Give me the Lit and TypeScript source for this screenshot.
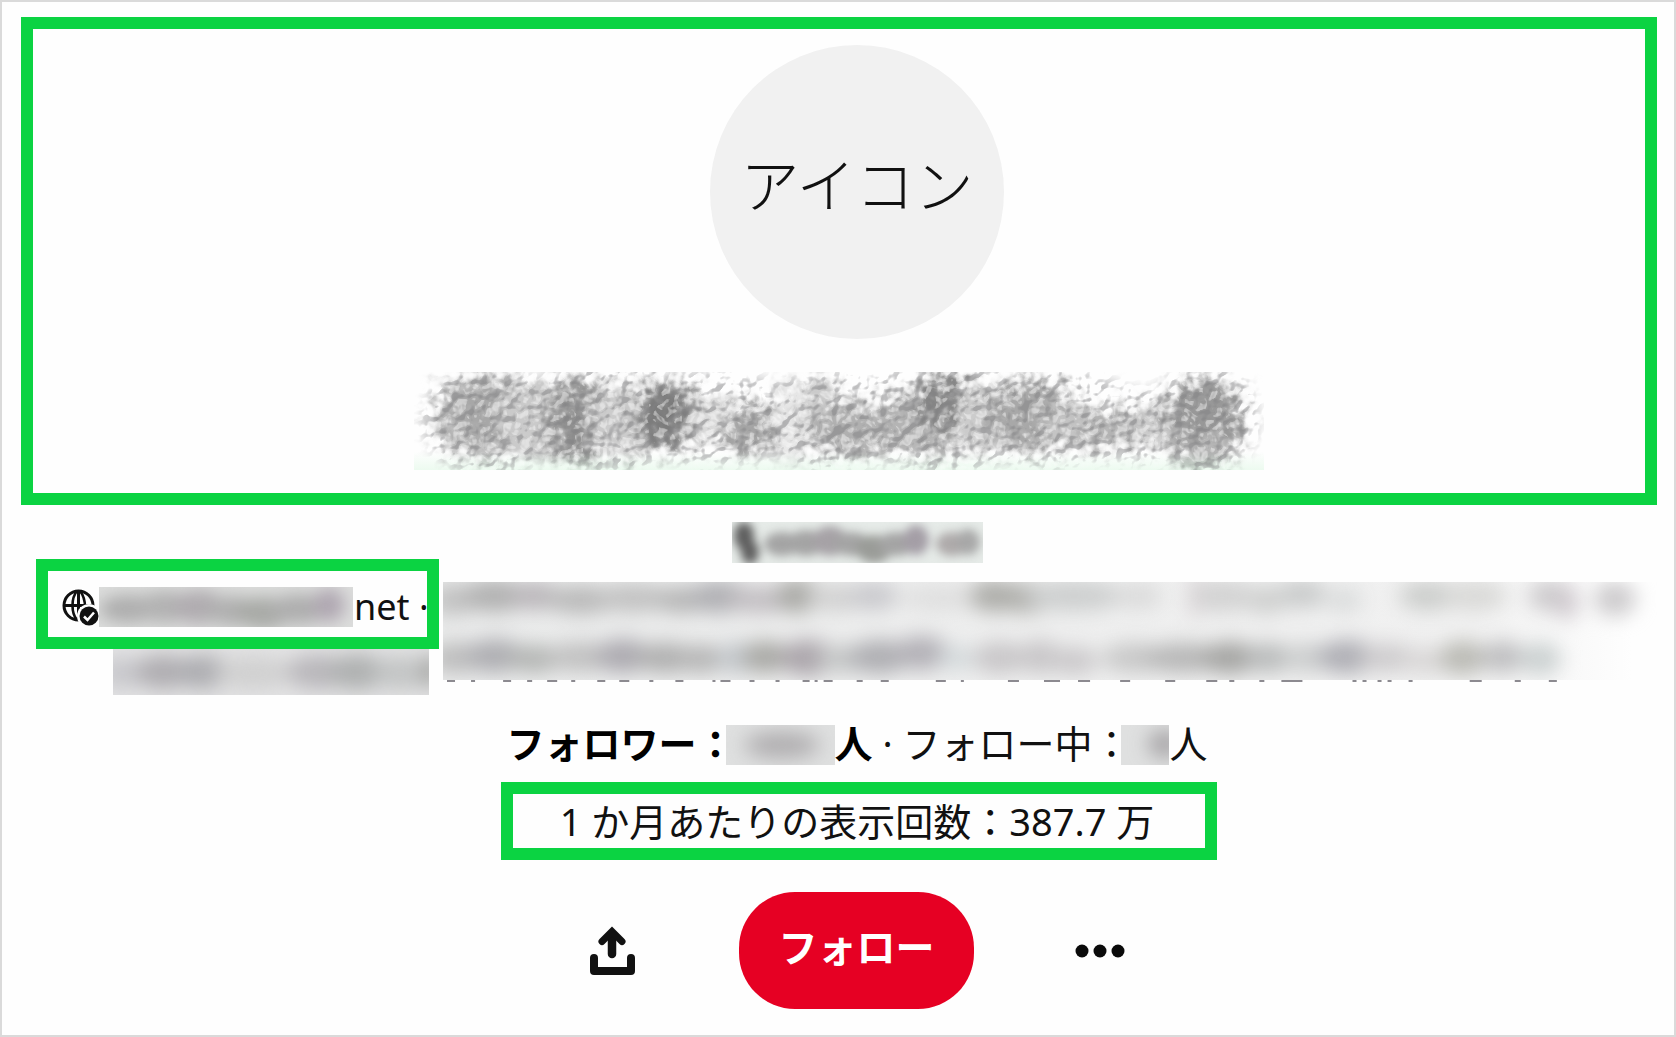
import { LitElement, html, svg, css } from "lit";
import { customElement, property } from "lit/decorators.js";

/** cx, cy, rx, ry, fill */
type Blob = [number, number, number, number, string];

const ellipses = (blobs: Blob[]) =>
  blobs.map(([cx, cy, rx, ry, fill]) => svg`<ellipse cx=${cx} cy=${cy} rx=${rx} ry=${ry} fill=${fill}></ellipse>`);

const NAME_BLOBS: Blob[] = [
  [70, 44, 50, 46, "#c4c4c4"],
  [60, 40, 34, 30, "#aeaeae"],
  [84, 42, 30, 32, "#a6a6a6"],
  [120, 48, 40, 42, "#cacaca"],
  [162, 50, 26, 46, "#9a9a9a"],
  [162, 58, 16, 26, "#8e8e8e"],
  [208, 48, 34, 40, "#cccccc"],
  [254, 44, 34, 36, "#9a9a9a"],
  [254, 44, 24, 24, "#7c7c7c"],
  [300, 46, 30, 22, "#dadada"],
  [340, 58, 27, 26, "#a4a4a4"],
  [376, 50, 20, 44, "#e6e6e6"],
  [408, 42, 20, 40, "#cacaca"],
  [444, 58, 48, 26, "#b0b0b0"],
  [508, 50, 42, 36, "#b4b4b4"],
  [532, 32, 28, 28, "#868686"],
  [568, 48, 30, 36, "#cccccc"],
  [618, 44, 44, 36, "#a8a8a8"],
  [660, 56, 36, 22, "#c4c4c4"],
  [706, 56, 44, 18, "#b2b2b2"],
  [750, 54, 30, 22, "#cccccc"],
  [788, 52, 40, 46, "#b4b4b4"],
  [790, 38, 34, 28, "#989898"],
];

/** Area the glass ripples cover around the letters. */
const NAME_HALO: Blob[] = [
  [74, 48, 66, 54, "#fff"],
  [190, 44, 90, 54, "#fff"],
  [300, 46, 90, 46, "#fff"],
  [420, 48, 80, 48, "#fff"],
  [530, 44, 90, 56, "#fff"],
  [640, 46, 90, 48, "#fff"],
  [730, 54, 80, 36, "#fff"],
  [790, 46, 54, 56, "#fff"],
];

const URL_BLOBS: Blob[] = [
  [12, 14, 10, 14, "#5e5e5e"],
  [18, 30, 9, 12, "#5e5e5e"],
  [50, 22, 18, 12, "#a4a4a4"],
  [74, 21, 18, 13, "#a4a4a4"],
  [98, 19, 18, 15, "#a6a2a6"],
  [120, 22, 18, 12, "#a4a4a4"],
  [142, 27, 18, 14, "#9a9c98"],
  [164, 22, 18, 12, "#a4a4a4"],
  [184, 18, 13, 15, "#a49ea6"],
  [220, 22, 16, 12, "#aeaaaa"],
  [236, 20, 12, 13, "#a8a8a8"],
];

const DOMAIN_BLOBS: Blob[] = [
  [30, 22, 30, 14, "#aeaeae"],
  [66, 20, 28, 16, "#b2b2b2"],
  [100, 20, 26, 17, "#b0acb0"],
  [134, 24, 28, 15, "#b0b0b0"],
  [165, 26, 28, 16, "#a8aaa6"],
  [200, 22, 30, 15, "#aeaeae"],
  [230, 18, 16, 17, "#b0a8b2"],
];

const LINE_BLOBS: Blob[] = [
  [8, 24, 24, 16, "#c8c8cc"],
  [50, 23, 28, 17, "#aeacb0"],
  [90, 23, 28, 17, "#acacb0"],
  [140, 24, 38, 17, "#d0d0d0"],
  [205, 23, 32, 17, "#b8b6ba"],
  [245, 23, 30, 18, "#aeb0b0"],
  [288, 24, 28, 17, "#c2c4c4"],
  [318, 22, 6, 18, "#8c8c88"],
];

const BIO_BLOBS: Blob[] = [
  [10, 18, 16, 16, "#c2c2c2"],
  [52, 14, 22, 16, "#b0b0b0"],
  [92, 14, 16, 14, "#b8b4b8"],
  [138, 18, 24, 14, "#b8b8b8"],
  [190, 16, 24, 14, "#c0c0c0"],
  [238, 18, 18, 13, "#b4b4b4"],
  [276, 15, 20, 16, "#aeaeb2"],
  [316, 18, 22, 13, "#c0bcc0"],
  [354, 14, 14, 17, "#a8a8a4"],
  [392, 16, 20, 13, "#d0d0d0"],
  [430, 14, 16, 14, "#c8c8cc"],
  [500, 16, 30, 12, "#dedede"],
  [550, 14, 16, 16, "#acaca8"],
  [582, 16, 18, 15, "#acaca8"],
  [630, 14, 34, 15, "#cccece"],
  [694, 14, 16, 13, "#dadada"],
  [752, 14, 5, 22, "#d8d2d5"],
  [780, 14, 20, 16, "#d2d2d2"],
  [822, 18, 14, 14, "#cecfce"],
  [858, 12, 16, 14, "#c8caca"],
  [900, 18, 12, 13, "#dadcdc"],
  [984, 14, 20, 14, "#caccca"],
  [1030, 14, 22, 14, "#d8d8d6"],
  [1106, 14, 15, 16, "#cccacc"],
  [1122, 20, 8, 18, "#d0cacf"],
  [1170, 17, 14, 17, "#cccacc"],
  [12, 76, 18, 16, "#bebebe"],
  [52, 74, 20, 17, "#aeaeb2"],
  [92, 77, 18, 14, "#b2b4b2"],
  [138, 75, 24, 15, "#c0c0c0"],
  [180, 74, 18, 17, "#acaab0"],
  [222, 76, 20, 15, "#aeaeae"],
  [258, 77, 16, 14, "#b4b4b4"],
  [294, 76, 14, 16, "#c4c8cc"],
  [322, 75, 15, 16, "#a8a8a4"],
  [364, 76, 18, 18, "#aaa4aa"],
  [400, 77, 18, 14, "#c4c6c6"],
  [436, 75, 20, 17, "#aeaeb2"],
  [478, 71, 18, 17, "#b2b0b6"],
  [512, 76, 12, 12, "#d2d8da"],
  [556, 76, 18, 16, "#c8c6c8"],
  [596, 75, 14, 17, "#c8c6c8"],
  [630, 79, 16, 14, "#cac8ca"],
  [690, 76, 22, 15, "#c8c8c8"],
  [738, 76, 26, 15, "#b6b6b6"],
  [786, 76, 20, 16, "#a4a4a2"],
  [824, 76, 16, 15, "#b8baba"],
  [862, 76, 16, 15, "#cccece"],
  [903, 75, 20, 17, "#aeaeb4"],
  [944, 76, 20, 14, "#cccacc"],
  [980, 79, 18, 13, "#d8d6d6"],
  [1018, 76, 15, 17, "#babab4"],
  [1058, 75, 14, 16, "#bebec0"],
  [1096, 77, 13, 16, "#cad0d0"],
].map(([cx, cy, rx, ry, fill]) => [cx, cy, Math.round((rx as number) * 1.5), ry, fill] as Blob);

const FOLLOWER_BLOBS: Blob[] = [[56, 20, 38, 13, "#aeacae"]];
const FOLLOWING_BLOBS: Blob[] = [[44, 19, 18, 15, "#aeacae"]];

/** x, width of the letter tips that show below the blurred lines */
const LETTER_TIPS: [number, number][] = [
  [4, 8], [28, 4], [60, 8], [84, 5], [104, 10], [128, 4], [154, 8],
  [176, 10], [206, 4], [232, 8], [269, 3], [277, 10], [306, 5], [332, 4], [359, 7], [371, 3],
  [380, 9], [413, 6], [437, 8], [492, 10], [517, 3], [564, 11], [600, 16], [634, 12],
  [676, 10], [721, 10], [762, 11], [785, 5], [815, 5], [837, 21], [908, 4], [918, 4],
  [933, 4], [943, 4], [964, 4], [1025, 12], [1070, 6], [1104, 8],
];

/** A patch of blurred content that fills its host box. */
@customElement("blur-patch")
export class BlurPatch extends LitElement {
  @property({ attribute: false }) blobs: Blob[] = [];
  @property({ type: Number }) w = 100;
  @property({ type: Number }) h = 40;
  @property({ type: Number }) blur = 7;

  static styles = css`
    :host {
      display: block;
      overflow: hidden;
      white-space: normal;
    }
    svg {
      display: block;
      width: 100%;
      height: 100%;
    }
  `;

  render() {
    return html`
      <svg viewBox="0 0 ${this.w} ${this.h}" preserveAspectRatio="none" aria-hidden="true">
        <defs>
          <filter id="soft" filterUnits="userSpaceOnUse" x="-40" y="-40" width=${this.w + 80} height=${this.h + 80} color-interpolation-filters="sRGB">
            <feGaussianBlur stdDeviation=${this.blur}></feGaussianBlur>
          </filter>
        </defs>
        <g filter="url(#soft)">${ellipses(this.blobs)}</g>
      </svg>
    `;
  }
}

/** The account name behind rippled glass. */
@customElement("glass-name")
export class GlassName extends LitElement {
  static styles = css`
    :host {
      display: block;
      width: 850px;
      max-width: 100%;
      height: 98px;
      overflow: hidden;
    }
    svg {
      display: block;
      width: 100%;
      height: 100%;
    }
  `;

  render() {
    return html`
      <svg viewBox="0 0 850 98" preserveAspectRatio="none" aria-hidden="true">
        <defs>
          <filter id="glass" filterUnits="userSpaceOnUse" x="-20" y="-20" width="890" height="138" color-interpolation-filters="sRGB">
            <feGaussianBlur in="SourceGraphic" stdDeviation="7" result="soft"></feGaussianBlur>
            <feTurbulence type="fractalNoise" baseFrequency="0.09" numOctaves="2" seed="8" result="waves"></feTurbulence>
            <feDisplacementMap in="soft" in2="waves" scale="50" xChannelSelector="R" yChannelSelector="G"></feDisplacementMap>
          </filter>
          <filter id="ripples" filterUnits="userSpaceOnUse" x="-20" y="-20" width="890" height="138" color-interpolation-filters="sRGB">
            <feGaussianBlur in="SourceAlpha" stdDeviation="7" result="halo"></feGaussianBlur>
            <feTurbulence type="fractalNoise" baseFrequency="0.085" numOctaves="2" seed="21" result="waves"></feTurbulence>
            <feDiffuseLighting in="waves" surfaceScale="10" diffuseConstant="1" lighting-color="#fff" result="lit">
              <feDistantLight azimuth="235" elevation="45"></feDistantLight>
            </feDiffuseLighting>
            <feColorMatrix in="lit" type="matrix" values="0 0 0 0 0.5  0 0 0 0 0.5  0 0 0 0 0.51  -1.1 0 0 0 0.5" result="dark"></feColorMatrix>
            <feColorMatrix in="lit" type="matrix" values="0 0 0 0 1  0 0 0 0 1  0 0 0 0 1  1.8 0 0 0 -1.35" result="light"></feColorMatrix>
            <feMerge result="both">
              <feMergeNode in="dark"></feMergeNode>
              <feMergeNode in="light"></feMergeNode>
            </feMerge>
            <feComposite in="both" in2="halo" operator="in"></feComposite>
          </filter>
          <linearGradient id="tint" x1="0" y1="0" x2="0" y2="1">
            <stop offset="0" stop-color="#d2f5da" stop-opacity="0"></stop>
            <stop offset="1" stop-color="#d2f5da" stop-opacity="0.4"></stop>
          </linearGradient>
        </defs>
        <g filter="url(#glass)">${ellipses(NAME_BLOBS)}</g>
        <rect x="0" y="80" width="850" height="18" fill="url(#tint)"></rect>
        <g filter="url(#ripples)">${ellipses(NAME_HALO)}</g>
      </svg>
    `;
  }
}

@customElement("app-root")
export class AppRoot extends LitElement {
  static styles = css`
    :host {
      display: block;
      font-family: "Noto Sans", "Noto Sans CJK JP", sans-serif;
      font-size: 38px;
      line-height: 40px;
      color: #111;
    }
    * {
      box-sizing: border-box;
    }
    .page {
      min-height: 100vh;
      padding: 15px 17px 25px 19px;
      border: 2px solid #dadada;
      background: #fefefe;
      display: flex;
      flex-direction: column;
    }
    .marked {
      border: 12px solid #0bd342;
    }
    .hero {
      display: flex;
      flex-direction: column;
      align-items: center;
      gap: 33px;
      padding: 16px 0 23px;
    }
    .avatar-row,
    .centered {
      align-self: stretch;
      display: flex;
      justify-content: center;
      padding-left: 36px;
    }
    .avatar {
      width: 294px;
      height: 294px;
      padding-bottom: 18px;
      border-radius: 50%;
      background: #f1f1f1;
      display: flex;
      align-items: center;
      justify-content: center;
      font-family: "Noto Sans CJK JP", sans-serif;
      font-size: 59px;
      line-height: 60px;
      font-weight: 300;
    }
    .url {
      margin-top: 17px;
    }
    .url-patch {
      width: 251px;
      height: 41px;
      background: #e6ebe8;
    }
    .bio {
      display: flex;
      align-items: flex-start;
      gap: 4px;
      margin-top: -4px;
      padding-left: 15px;
    }
    .site {
      width: 403px;
      height: 90px;
      padding: 6px 0 0 14px;
      display: flex;
      align-items: center;
      overflow: hidden;
      white-space: nowrap;
      font-size: 36px;
    }
    .globe {
      flex: none;
      width: 37px;
      height: 37px;
    }
    .domain-patch {
      flex: none;
      width: 254px;
      height: 40px;
      margin-right: 1px;
      background: #dcdddc;
    }
    .line-patch {
      width: 316px;
      height: 46px;
      margin-left: 77px;
      background: #e4e4e5;
    }
    .about {
      flex: 1;
      padding-top: 23px;
    }
    .about-patch {
      height: 98px;
      background: linear-gradient(to right, #ebecec 0, #f1f1f1 85%, #fefefe 98%);
    }
    .tips {
      display: block;
      width: 100%;
      height: 3px;
    }
    .stats {
      margin-top: 29px;
      white-space: nowrap;
    }
    .stats p {
      margin: 0;
      display: flex;
      align-items: flex-end;
      white-space: pre;
      line-height: 38px;
      padding-bottom: 1px;
    }
    .stats b {
      display: flex;
      align-items: flex-end;
      color: #000;
    }
    .stats span {
      padding-bottom: 3px;
    }
    .count-patch {
      width: 109px;
      height: 40px;
      margin-left: -9px;
      background: #dfe0e0;
    }
    .count-patch.short {
      width: 48px;
    }
    .views {
      margin-top: 16px;
      padding-left: 40px;
    }
    .views p {
      width: 716px;
      margin: 0;
      padding: 7px 4px 7px 0;
      text-align: center;
    }
    .actions {
      align-items: center;
      margin-top: 32px;
    }
    button {
      border: 0;
      padding: 0;
      background: none;
      font: inherit;
      color: inherit;
      display: flex;
    }
    .share {
      margin-right: 103px;
    }
    .follow {
      height: 117px;
      width: 235px;
      padding-bottom: 8px;
      border-radius: 56px;
      background: #e60023;
      color: #fff;
      font-size: 39px;
      font-weight: 700;
      align-items: center;
      justify-content: center;
    }
    .more {
      margin-left: 101px;
    }
  `;

  render() {
    return html`
      <main class="page">
        <section class="hero marked">
          <div class="avatar-row"><div class="avatar">アイコン</div></div>
          <glass-name></glass-name>
        </section>

        <div class="centered url">
          <blur-patch class="url-patch" .blobs=${URL_BLOBS} .w=${251} .h=${41} .blur=${5}></blur-patch>
        </div>

        <section class="bio">
          <div>
            <div class="site marked">
              <svg class="globe" viewBox="0 0 37 37" aria-hidden="true">
                <g fill="none" stroke="#111" stroke-width="3">
                  <circle cx="16.500" cy="16.500" r="14.500"></circle>
                  <path d="M2 16.500H31M16.500 2V31"></path>
                  <path d="M15 2C9 9 9 24 15 31M18 2C22 7 23 11 23 18" stroke-width="2.600"></path>
                </g>
                <circle cx="27" cy="27" r="12" fill="#fefefe"></circle>
                <circle cx="27" cy="27" r="9.500" fill="#111"></circle>
                <path d="M22 27.500L25.500 31L32 23.500" fill="none" stroke="#fefefe" stroke-width="2.500"></path>
              </svg>
              <blur-patch class="domain-patch" .blobs=${DOMAIN_BLOBS} .w=${254} .h=${40} .blur=${8}></blur-patch>
              <span>net ·</span>
            </div>
            <blur-patch class="line-patch" .blobs=${LINE_BLOBS} .w=${316} .h=${46} .blur=${10}></blur-patch>
          </div>
          <div class="about">
            <blur-patch class="about-patch" .blobs=${BIO_BLOBS} .w=${1212} .h=${98} .blur=${10}></blur-patch>
            <svg class="tips" viewBox="0 0 1212 3" preserveAspectRatio="none" aria-hidden="true">
              ${LETTER_TIPS.map(([x, w]) => svg`<rect x=${x} y="0" width=${w} height="2" fill="#8c8a90"></rect>`)}
            </svg>
          </div>
        </section>

        <div class="centered stats">
          <p>
            <b><span>フォロワー：</span><blur-patch class="count-patch" .blobs=${FOLLOWER_BLOBS} .w=${109} .h=${40} .blur=${10}></blur-patch><span>人</span></b
            ><span> · </span><span>フォロー中：</span
            ><blur-patch class="count-patch short" .blobs=${FOLLOWING_BLOBS} .w=${48} .h=${40} .blur=${9}></blur-patch
            ><span>人</span>
          </p>
        </div>

        <div class="centered views">
          <p class="marked">1 か月あたりの表示回数：387.7 万</p>
        </div>

        <div class="centered actions">
          <button class="share" type="button" aria-label="共有">
            <svg width="47" height="49" viewBox="0 0 47 49" aria-hidden="true">
              <path d="M5 32V45H42V32" fill="none" stroke="#111" stroke-width="8" stroke-linecap="round" stroke-linejoin="round"></path>
              <path d="M23 28V9" fill="none" stroke="#111" stroke-width="8.500" stroke-linecap="round"></path>
              <path d="M13 15.500L23 5.500L33 15.500" fill="none" stroke="#111" stroke-width="7" stroke-linecap="round"></path>
            </svg>
          </button>
          <button class="follow" type="button">フォロー</button>
          <button class="more" type="button" aria-label="その他">
            <svg width="50" height="14" viewBox="0 0 50 14" aria-hidden="true">
              <circle cx="7" cy="7" r="6.500" fill="#0a0a0a"></circle>
              <circle cx="25" cy="7" r="6.500" fill="#0a0a0a"></circle>
              <circle cx="43" cy="7" r="6.500" fill="#0a0a0a"></circle>
            </svg>
          </button>
        </div>
      </main>
    `;
  }
}
